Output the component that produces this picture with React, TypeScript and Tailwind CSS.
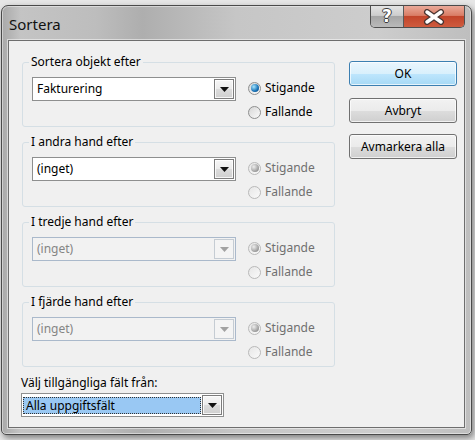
import React from "react";

const Arrow = ({ disabled }: { disabled?: boolean }) => (
  <div
    className={
      disabled
        ? "flex w-[20px] items-center justify-center border border-[#c5ccd3] bg-[#f4f4f4]"
        : "flex w-[20px] items-center justify-center border border-[#7c7c7c] bg-[linear-gradient(180deg,#f6f6f6_0%,#ebebeb_50%,#dcdcdc_51%,#cfcfcf_100%)] shadow-[inset_0_0_0_1px_rgba(255,255,255,0.8)]"
    }
  >
    <svg width="9" height="5" viewBox="0 0 9 5">
      <path d="M0 0h9L4.5 5z" fill={disabled ? "#a2a2a2" : "#111"} />
    </svg>
  </div>
);

const Combo = ({
  value,
  disabled,
  selected,
  className = "",
}: {
  value: string;
  disabled?: boolean;
  selected?: boolean;
  className?: string;
}) => (
  <div
    className={
      (disabled
        ? "border-[#aab9cb] bg-[#f2f2f2] text-[#858585]"
        : "border-[#8e8f8f] bg-white text-black") +
      " flex h-[24px] items-stretch border p-[1px] " +
      className
    }
  >
    {selected ? (
      <div className="mr-[1px] mt-[2px] mb-[1px] flex flex-1 items-center border border-dotted border-[#333] bg-[#99c8f3] pl-[2px]">
        {value}
      </div>
    ) : (
      <div className="flex flex-1 items-center pl-[3px]">{value}</div>
    )}
    <Arrow disabled={disabled} />
  </div>
);

const Radio = ({
  label,
  checked,
  disabled,
}: {
  label: string;
  checked?: boolean;
  disabled?: boolean;
}) => (
  <div className="flex h-[16px] items-center">
    <div
      className={
        disabled
          ? "flex h-[13px] w-[13px] items-center justify-center rounded-full border border-[#b9b9b9] bg-[linear-gradient(135deg,#e6e6e6,#fafafa)]"
          : "flex h-[13px] w-[13px] items-center justify-center rounded-full border border-[#8e8f8f] bg-[linear-gradient(135deg,#d6d6d6,#fbfbfb)]"
      }
    >
      {checked && (
        <div
          className={
            disabled
              ? "h-[8px] w-[8px] rounded-full bg-[radial-gradient(circle_at_35%_35%,#eeeeee,#9a9a9a_70%,#7d7d7d)]"
              : "h-[8px] w-[8px] rounded-full bg-[radial-gradient(circle_at_35%_35%,#a6e6ff,#1670b5_60%,#0c3f72)]"
          }
        />
      )}
    </div>
    <span className={disabled ? "ml-[4px] text-[#6f6f6f]" : "ml-[4px] text-black"}>
      {label}
    </span>
  </div>
);

const Group = ({
  title,
  value,
  comboDisabled,
  radiosDisabled,
  first,
}: {
  title: string;
  value: string;
  comboDisabled?: boolean;
  radiosDisabled?: boolean;
  first?: boolean;
}) => (
  <div
    className={
      (first ? "" : "mt-[15px] ") +
      "relative flex h-[65px] w-[313px] items-start rounded-[3px] border border-[#d5dfe5] pl-[9px] pt-[14px]"
    }
  >
    <span className="absolute left-[6px] top-[-9px] bg-[#f0f0f0] px-[2px] leading-[16px] text-black">
      {title}
    </span>
    <Combo value={value} disabled={comboDisabled} className="w-[204px]" />
    <div className="ml-[12px] mt-[3px] flex flex-col gap-[8px]">
      <Radio label="Stigande" checked disabled={radiosDisabled} />
      <Radio label="Fallande" disabled={radiosDisabled} />
    </div>
  </div>
);

const Button = ({ label, def }: { label: string; def?: boolean }) => (
  <button
    className={
      def
        ? "flex h-[25px] w-[108px] items-center justify-center rounded-[3px] border border-[#3c7fb1] bg-[linear-gradient(180deg,#eaf6fd_0%,#d9f0fc_50%,#bee6fd_51%,#a7d9f5_100%)] text-black shadow-[inset_0_0_0_1px_rgba(255,255,255,0.7)]"
        : "flex h-[25px] w-[108px] items-center justify-center rounded-[3px] border border-[#707070] bg-[linear-gradient(180deg,#f2f2f2_0%,#ebebeb_50%,#dddddd_51%,#cfcfcf_100%)] text-black shadow-[inset_0_0_0_1px_rgba(255,255,255,0.7)]"
    }
  >
    {label}
  </button>
);

export default function App() {
  return (
    <div className="h-[440px] w-[475px] overflow-hidden bg-[#e6e6e6] pl-[1px] pt-[5px] font-['Noto_Sans',sans-serif] text-[12px] leading-[16px]">
      {/* window frame */}
      <div className="flex h-[430px] w-[471px] flex-col rounded-t-[7px] rounded-b-[5px] border border-[#4a4a4a] bg-[linear-gradient(90deg,#a9a9a9_0%,#c4c4c4_4%,#bdbdbd_20%,#aeaeae_30%,#c6c6c6_50%,#cdcdcd_80%,#bebebe_100%)] px-[6px] pb-[6px] shadow-[inset_0_0_0_1px_rgba(255,255,255,0.45),2px_3px_6px_rgba(0,0,0,0.45)]">
        {/* title bar */}
        <div className="flex h-[34px] items-start justify-between">
          <span className="pl-[1px] pt-[7px] text-[15px] leading-[22px] text-[#111]">Sortera</span>
          <div className="flex h-[22px] rounded-b-[5px] border border-t-0 border-[#4f4f4f]">
            <div className="flex w-[33px] items-center justify-center rounded-bl-[4px] border-r border-[#5a5a5a] bg-[linear-gradient(180deg,#e4e4e4_0%,#cdcdcd_45%,#a6a6a6_50%,#bababa_100%)]">
              <span className="font-['DejaVu_Sans',sans-serif] text-[17px] font-bold leading-[21px] text-white [text-shadow:1px_0_0_#3a3a3a,-1px_0_0_#3a3a3a,0_1px_0_#3a3a3a,0_-1px_0_#3a3a3a]">
                ?
              </span>
            </div>
            <div className="flex w-[60px] items-center justify-center rounded-br-[4px] bg-[linear-gradient(180deg,#eaa999_0%,#d97d66_45%,#c2452b_50%,#cf5b3e_100%)]">
              <svg width="22" height="16" viewBox="0 0 22 16">
                <path d="M4 3l14 10M18 3L4 13" stroke="#4a3532" strokeWidth="6" strokeLinecap="round" />
                <path d="M4 3l14 10M18 3L4 13" stroke="#fff" strokeWidth="3.5" strokeLinecap="round" />
              </svg>
            </div>
          </div>
        </div>

        {/* client area */}
        <div className="flex flex-1 border border-[#6e6e6e] bg-[#f0f0f0] pl-[12px] shadow-[0_0_0_1px_rgba(255,255,255,0.5)]">
          <div className="flex flex-col">
            <div className="pl-[1px] pt-[21px]">
              <Group first title="Sortera objekt efter" value="Fakturering" />
              <Group title="I andra hand efter" value="(inget)" radiosDisabled />
              <Group title="I tredje hand efter" value="(inget)" comboDisabled radiosDisabled />
              <Group title="I fjärde hand efter" value="(inget)" comboDisabled radiosDisabled />
            </div>
            <div className="mt-[8px] text-black">Välj tillgängliga fält från:</div>
            <Combo value="Alla uppgiftsfält" selected className="mt-[2px] w-[203px]" />
          </div>
          <div className="ml-[14px] flex flex-col pt-[20px]">
            <Button label="OK" def />
            <div className="mt-[12px]">
              <Button label="Avbryt" />
            </div>
            <div className="mt-[11px]">
              <Button label="Avmarkera alla" />
            </div>
          </div>
        </div>
      </div>
    </div>
  );
}
